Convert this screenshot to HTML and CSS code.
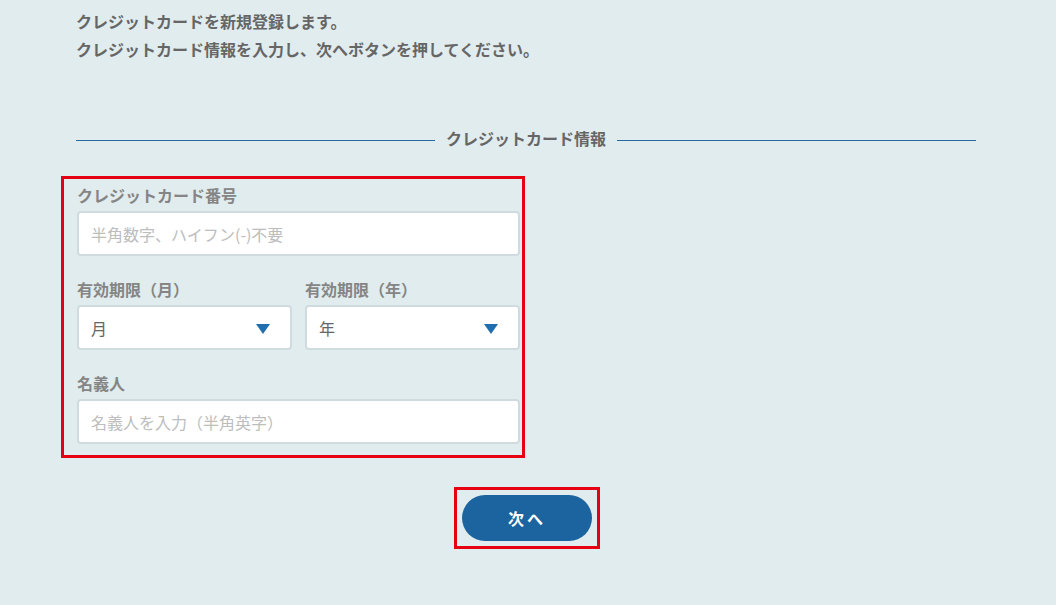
FILE: index.html
```html
<!DOCTYPE html>
<html lang="ja">
<head>
<meta charset="utf-8">
<link rel="stylesheet" href="styles.css">
</head>
<body>
<main class="page">
  <div class="intro">
    <p>クレジットカードを新規登録します。</p>
    <p>クレジットカード情報を入力し、次へボタンを押してください。</p>
  </div>

  <div class="divider"><span class="rule"></span><h2>クレジットカード情報</h2><span class="rule"></span></div>

  <div class="form-box">
    <div class="field">
      <label class="label">クレジットカード番号</label>
      <div class="input placeholder">半角数字、ハイフン(-)不要</div>
    </div>
    <div class="row">
      <div class="field">
        <label class="label">有効期限（月）</label>
        <div class="input select"><span>月</span><span class="arrow"></span></div>
      </div>
      <div class="field">
        <label class="label">有効期限（年）</label>
        <div class="input select"><span>年</span><span class="arrow"></span></div>
      </div>
    </div>
    <div class="field">
      <label class="label">名義人</label>
      <div class="input placeholder">名義人を入力（半角英字）</div>
    </div>
  </div>

  <div class="actions">
    <div class="btn-box"><button class="btn">次へ</button></div>
  </div>
</main>
</body>
</html>
```

FILE: styles.css
```css
html, body {
  margin: 0;
  padding: 0;
  background: #e1ecee;
  height: 100%;
}
body {
  font-family: "Noto Sans CJK JP", "Noto Sans", sans-serif;
  color: #666;
}
.page {
  width: 900px;
  margin-left: 76px;
  padding-top: 7px;
}
.intro p {
  margin: 0;
  font-size: 16px;
  line-height: 28px;
  font-weight: bold;
  color: #666;
}
.divider {
  display: flex;
  align-items: center;
  gap: 11px;
  margin-top: 62px;
  height: 26px;
}
.divider .rule {
  flex: 1;
  height: 1px;
  background: #2a6aa3;
  position: relative;
  top: 2px;
}
.divider h2 {
  margin: 0;
  font-size: 16px;
  line-height: 26px;
  font-weight: bold;
  color: #666;
}
.form-box {
  width: 443px;
  margin-left: -15px;
  margin-top: 25px;
  border: 3px solid #e60012;
  padding: 4px 2px 11px 13px;
  display: flex;
  flex-direction: column;
  gap: 21px;
}
.row {
  display: flex;
  gap: 13px;
}
.row .field {
  flex: 1;
}
.label {
  display: block;
  font-size: 16px;
  line-height: 24px;
  font-weight: bold;
  color: #858585;
  margin-bottom: 4px;
}
.input {
  box-sizing: border-box;
  height: 45px;
  background: #fff;
  border: 2px solid #d0dbe0;
  border-radius: 4px;
  padding: 0 12px;
  display: flex;
  align-items: center;
  font-size: 16px;
  color: #666;
}
.placeholder {
  color: #bdbdbd;
}
.select {
  justify-content: space-between;
  padding-right: 20px;
}
.arrow {
  width: 0;
  height: 0;
  border-left: 7px solid transparent;
  border-right: 7px solid transparent;
  border-top: 10px solid #1f6fb0;
  margin-top: 2px;
}
.actions {
  display: flex;
  justify-content: center;
  margin-top: 29px;
}
.btn-box {
  border: 3px solid #e60012;
  padding: 5px;
  margin-left: 2px;
}
.btn {
  display: block;
  width: 130px;
  height: 46px;
  border: none;
  border-radius: 23px;
  background: #1b64a0;
  color: #fff;
  font-family: "Noto Sans CJK JP", sans-serif;
  font-size: 16px;
  font-weight: bold;
  letter-spacing: 3px;
  cursor: pointer;
}
```
